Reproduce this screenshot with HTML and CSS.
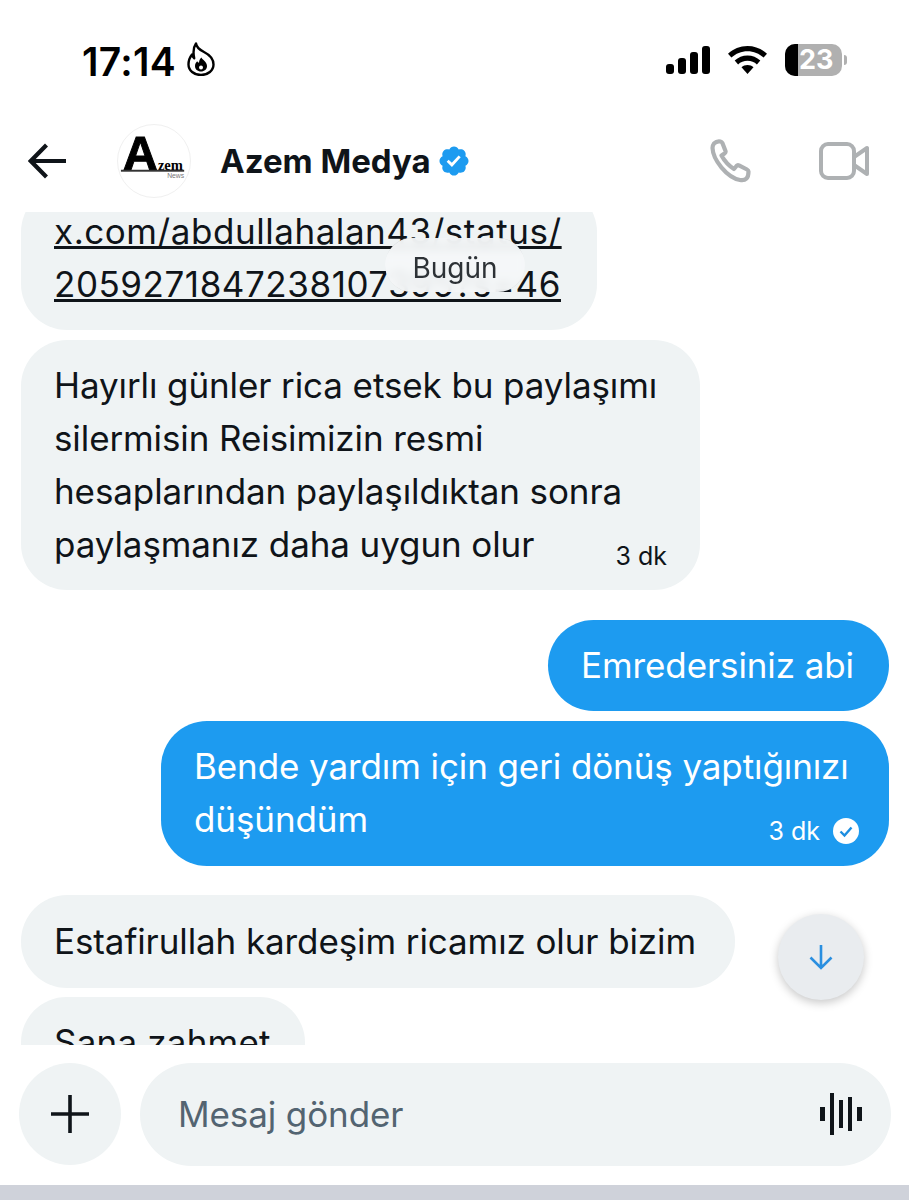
FILE: index.html
```html
<!DOCTYPE html>
<html lang="tr">
<head>
    <meta charset="UTF-8">
    <title>Azem Medya</title>
    <link rel="stylesheet" href="styles.css">
</head>
<body>
    <div class="phone">
        <div class="status-bar">
            <div class="status-left">
                <span class="clock">17:14</span>
                <svg class="flame" viewBox="0 0 28 34" fill="none" stroke="#000" stroke-width="2.400" stroke-linejoin="round">
                    <path d="M9 1.500c.5 4 3 6 8 8.500 6 3 9.500 7 9.500 12.500 0 6-5.500 10.500-12.500 10.500S1.500 28.500 1.500 22.500c0-4 1.500-7.500 3.500-10 .3 2 1 3 2.200 3.800C6 10.500 6.500 5 9 1.500z"/>
                    <path d="M14.500 15.500c.8 2.500 5.500 4 5.500 8.500 0 3.200-2.600 5.500-6 5.500s-6-2.300-6-5.500c0-2 1-3.700 2.200-4.800.4.900 1 1.400 1.800 1.500.1-2 .9-3.800 2.500-5.200z" fill="#000" stroke="none"/>
                    <circle cx="14" cy="25.500" r="2" fill="#fff" stroke="none"/>
                </svg>
            </div>
            <div class="status-right">
                <div class="signal">
                    <span class="bar bar-1"></span>
                    <span class="bar bar-2"></span>
                    <span class="bar bar-3"></span>
                    <span class="bar bar-4"></span>
                </div>
                <svg class="wifi" viewBox="0 0 39 28" fill="#000">
                    <path d="M19.500 0C27 0 33.800 3 39 7.800l-3.400 3.800C31.200 7.600 25.600 5.200 19.500 5.200S7.800 7.600 3.400 11.600L0 7.800C5.200 3 12 0 19.500 0z"/>
                    <path d="M19.500 9.600c4.900 0 9.400 1.900 12.800 5l-3.400 3.800c-2.500-2.200-5.800-3.600-9.400-3.600s-6.900 1.400-9.400 3.600l-3.400-3.800c3.400-3.100 7.900-5 12.800-5z"/>
                    <path d="M19.500 19c2.300 0 4.400.9 6 2.300L19.500 28l-6-6.700c1.600-1.400 3.700-2.300 6-2.300z"/>
                </svg>
                <div class="battery">
                    <div class="battery-body">
                        <span class="battery-fill"></span>
                        <span class="battery-num">23</span>
                    </div>
                    <span class="battery-nub"></span>
                </div>
            </div>
        </div>

        <div class="chat-header">
            <svg class="back" viewBox="0 0 38 36" fill="none" stroke="#0f1419" stroke-width="4.200">
                <path d="M38 18H4M18.500 2L2.800 18l15.700 16"/>
            </svg>
            <div class="avatar">
                <svg viewBox="0 0 74 74">
                    <text class="logo-a" x="23" y="46">A</text>
                    <text class="logo-zem" x="41" y="46">zem</text>
                    <rect x="3" y="46" width="65" height="2" fill="#333"/>
                    <text class="logo-news" x="68" y="54">News</text>
                </svg>
            </div>
            <span class="chat-name">Azem Medya</span>
            <svg class="badge" viewBox="0 0 24 24" fill="#1d9bf0">
                <path d="M22.250 12c0-1.430-.880-2.670-2.190-3.340.460-1.390.200-2.900-.810-3.910s-2.520-1.270-3.910-.810c-.660-1.310-1.910-2.190-3.340-2.190s-2.670.880-3.330 2.190c-1.400-.460-2.910-.200-3.920.810s-1.260 2.520-.800 3.910c-1.310.670-2.200 1.910-2.200 3.340s.890 2.670 2.200 3.340c-.460 1.390-.210 2.900.800 3.910s2.520 1.260 3.910.810c.670 1.310 1.910 2.190 3.340 2.190s2.680-.880 3.340-2.190c1.390.450 2.900.200 3.910-.810s1.270-2.520.810-3.910c1.310-.670 2.190-1.910 2.190-3.340zm-11.710 4.200L6.800 12.460l1.410-1.420 2.260 2.260 4.800-5.230 1.470 1.360-6.200 6.770z"/>
            </svg>
            <div class="header-actions">
                <svg class="phone-icon" viewBox="0 0 44 44" fill="none" stroke="#aeb1b3" stroke-width="4.200" stroke-linejoin="round">
                    <path d="M4 4.500C6 2.500 8 2 10.500 2.500c1 .2 1.500.7 2 1.700l3 7.800c.3 1 0 1.800-1 2.500l-3 2c3 5.500 7 10 12.500 13.500l2.500-3c.7-.8 1.500-1 2.500-.6l8 4.100c1 .5 1.500 1 1.500 2 0 3-.5 5.500-2 7-1.500 1.500-4 2-6.500 1.500C17 38.500 3 21 2.500 9c0-1.500.6-3.300 1.500-4.500z"/>
                </svg>
                <svg class="video-icon" viewBox="0 0 50 38" fill="none" stroke="#aeb1b3" stroke-width="4" stroke-linejoin="round">
                    <rect x="2" y="2" width="33" height="34" rx="7"/>
                    <path d="M35 15l13-9v26l-13-9"/>
                </svg>
            </div>
        </div>

        <div class="messages">
            <div class="bubble in w-link">
                <a class="link">x.com/abdullahalan43/status/</a><br>
                <a class="link">2059271847238107395?s=46</a>
            </div>
            <div class="bubble in w-long">
                Hayırlı günler rica etsek bu paylaşımı<br>
                silermisin Reisimizin resmi<br>
                hesaplarından paylaşıldıktan sonra
                <div class="last-line">
                    <span>paylaşmanız daha uygun olur</span>
                    <span class="time">3 dk</span>
                </div>
            </div>
            <div class="bubble out w-short group-start">Emredersiniz abi</div>
            <div class="bubble out w-reply">
                Bende yardım için geri dönüş yaptığınızı
                <div class="last-line">
                    <span>düşündüm</span>
                    <span class="time-wrap">
                        <span class="time">3 dk</span>
                        <svg class="seen" viewBox="0 0 26 26">
                            <circle cx="13" cy="13" r="13" fill="#fff"/>
                            <path d="M7.500 13.500l4 4 7-8" fill="none" stroke="#1d8ee0" stroke-width="2.400"/>
                        </svg>
                    </span>
                </div>
            </div>
            <div class="bubble in w-esta">Estafirullah kardeşim ricamız olur bizim</div>
            <div class="bubble in w-sana">Sana zahmet</div>

            <div class="day-pill">Bugün</div>
            <div class="scroll-down">
                <svg viewBox="0 0 24 26" fill="none" stroke="#2a8fe0" stroke-width="2.600">
                    <path d="M12 1v23M1.500 13.500L12 24l10.500-10.500"/>
                </svg>
            </div>
        </div>

        <div class="composer">
            <div class="plus-btn">
                <svg viewBox="0 0 38 38" fill="none" stroke="#0f1419" stroke-width="3.600">
                    <path d="M19 0v38M0 19h38"/>
                </svg>
            </div>
            <div class="input-box">
                <span class="placeholder">Mesaj gönder</span>
                <div class="wave">
                    <span class="w1"></span>
                    <span class="w2"></span>
                    <span class="w3"></span>
                    <span class="w4"></span>
                    <span class="w5"></span>
                </div>
            </div>
        </div>
        <div class="bottom-strip"></div>
    </div>
</body>
</html>
```

FILE: styles.css
```css
* {
    box-sizing: border-box;
}
body {
    margin: 0;
    background-color: #fff;
    color: #0f1419;
    font-family: "Inter", "Liberation Sans", sans-serif;
}
.phone {
    display: flex;
    flex-direction: column;
    height: 1200px;
    overflow: hidden;
}

/* status bar */
.status-bar {
    display: flex;
    justify-content: space-between;
    height: 120px;
    padding: 42px 62px 0 82px;
}
.status-left {
    display: flex;
    align-items: flex-start;
    gap: 11px;
}
.clock {
    font-size: 39px;
    line-height: 40px;
    font-weight: 600;
    letter-spacing: 0.3px;
    color: #000;
}
.flame {
    width: 28px;
    height: 34px;
}
.status-right {
    display: flex;
    align-items: flex-start;
}
.signal {
    display: flex;
    align-items: flex-end;
    gap: 4px;
    height: 28px;
    margin-top: 4px;
}
.bar {
    width: 8px;
    background-color: #000;
    border-radius: 3px;
}
.bar-1 { height: 10px; }
.bar-2 { height: 16px; }
.bar-3 { height: 22px; }
.bar-4 { height: 28px; }
.wifi {
    width: 39px;
    height: 28px;
    margin: 4px 0 0 18px;
}
.battery {
    display: flex;
    align-items: center;
    margin: 2px 0 0 18px;
}
.battery-body {
    display: flex;
    width: 57px;
    height: 32px;
    background-color: #b0b0b0;
    border-radius: 10px;
    overflow: hidden;
}
.battery-fill {
    width: 13px;
    background-color: #000;
}
.battery-num {
    margin-left: 1px;
    font-size: 27px;
    line-height: 32px;
    font-weight: 700;
    color: #fff;
}
.battery-nub {
    width: 3px;
    height: 10px;
    margin-left: 2px;
    background-color: #b0b0b0;
    border-radius: 0 3px 3px 0;
}

/* header */
.chat-header {
    display: flex;
    align-items: center;
    height: 92px;
    padding: 0 40px 10px 28px;
}
.back {
    width: 38px;
    height: 36px;
}
.avatar {
    width: 74px;
    height: 74px;
    margin-left: 51px;
    border: 1px solid #f0f0f0;
    border-radius: 50%;
}
.avatar svg {
    display: block;
    width: 100%;
    height: 100%;
}
.logo-a {
    font-family: "Liberation Sans", sans-serif;
    font-size: 50px;
    font-weight: 700;
    text-anchor: middle;
    stroke: #000;
    stroke-width: 1;
}
.logo-zem {
    font-family: "Liberation Serif", serif;
    font-size: 15px;
    font-weight: 700;
}
.logo-news {
    font-family: "Liberation Sans", sans-serif;
    font-size: 7px;
    text-anchor: end;
    fill: #777;
}
.chat-name {
    margin-left: 29px;
    font-size: 33px;
    font-weight: 700;
}
.badge {
    width: 34px;
    height: 34px;
    margin-left: 6px;
}
.header-actions {
    display: flex;
    align-items: center;
    gap: 65px;
    margin-left: auto;
}
.phone-icon {
    width: 44px;
    height: 44px;
}
.video-icon {
    width: 50px;
    height: 38px;
}

/* messages */
.messages {
    position: relative;
    flex: 1;
    display: flex;
    flex-direction: column;
    gap: 10px;
    padding: 0 20px 0 21px;
    overflow: hidden;
}
.bubble {
    flex-shrink: 0;
    padding: 19px 33px;
    font-size: 35px;
    line-height: 53px;
    letter-spacing: -0.1px;
    border-radius: 46px;
}
.in {
    align-self: flex-start;
    background-color: #eff3f4;
}
.out {
    align-self: flex-end;
    background-color: #1d9bf0;
    color: #fff;
}
.group-start {
    margin-top: 20px;
}
.w-link {
    width: 576px;
    margin-top: -26px;
    letter-spacing: 0.55px;
}
.w-long {
    width: 679px;
}
.w-short {
    width: 341px;
}
.w-reply {
    width: 728px;
    padding-right: 30px;
    padding-bottom: 20px;
}
.w-esta {
    width: 714px;
    margin-top: 19px;
    padding-top: 20px;
    padding-bottom: 20px;
}
.w-sana {
    width: 284px;
    margin-top: -1px;
    letter-spacing: 0.2px;
}
.link {
    text-decoration: underline;
}
.last-line {
    display: flex;
    justify-content: space-between;
    align-items: flex-end;
}
.time {
    font-size: 25px;
    line-height: 30px;
    letter-spacing: 0;
}
.time-wrap {
    display: flex;
    align-items: center;
    gap: 13px;
}
.seen {
    width: 26px;
    height: 26px;
}
.day-pill {
    position: absolute;
    top: 26px;
    left: 385px;
    width: 140px;
    height: 54px;
    font-size: 28px;
    line-height: 61px;
    text-align: center;
    color: #2d3236;
    background-color: rgba(245, 247, 248, 0.92);
    border-radius: 27px;
    backdrop-filter: blur(4px);
}
.scroll-down {
    position: absolute;
    top: 702px;
    left: 778px;
    display: flex;
    align-items: center;
    justify-content: center;
    width: 86px;
    height: 86px;
    background-color: #e9ecef;
    border-radius: 50%;
    box-shadow: 0 3px 10px rgba(0, 0, 0, 0.22);
}
.scroll-down svg {
    width: 24px;
    height: 26px;
}

/* composer */
.composer {
    display: flex;
    align-items: center;
    gap: 19px;
    height: 140px;
    padding: 0 18px 2px 19px;
}
.plus-btn {
    display: flex;
    align-items: center;
    justify-content: center;
    flex-shrink: 0;
    width: 102px;
    height: 102px;
    background-color: #eff3f4;
    border-radius: 50%;
}
.plus-btn svg {
    width: 38px;
    height: 38px;
}
.input-box {
    flex: 1;
    display: flex;
    align-items: center;
    justify-content: space-between;
    height: 103px;
    padding: 0 29px 0 38px;
    background-color: #eff3f4;
    border-radius: 52px;
}
.placeholder {
    font-size: 35px;
    letter-spacing: -0.1px;
    color: #536471;
}
.wave {
    display: flex;
    align-items: center;
    gap: 5px;
}
.wave span {
    width: 4px;
    background-color: #0f1419;
}
.wave .w1, .wave .w5 { width: 5px; height: 14px; }
.wave .w2 { height: 42px; }
.wave .w3 { height: 28px; }
.wave .w4 { height: 34px; }
.bottom-strip {
    flex-shrink: 0;
    height: 15px;
    background-color: #cfd2da;
}
```
